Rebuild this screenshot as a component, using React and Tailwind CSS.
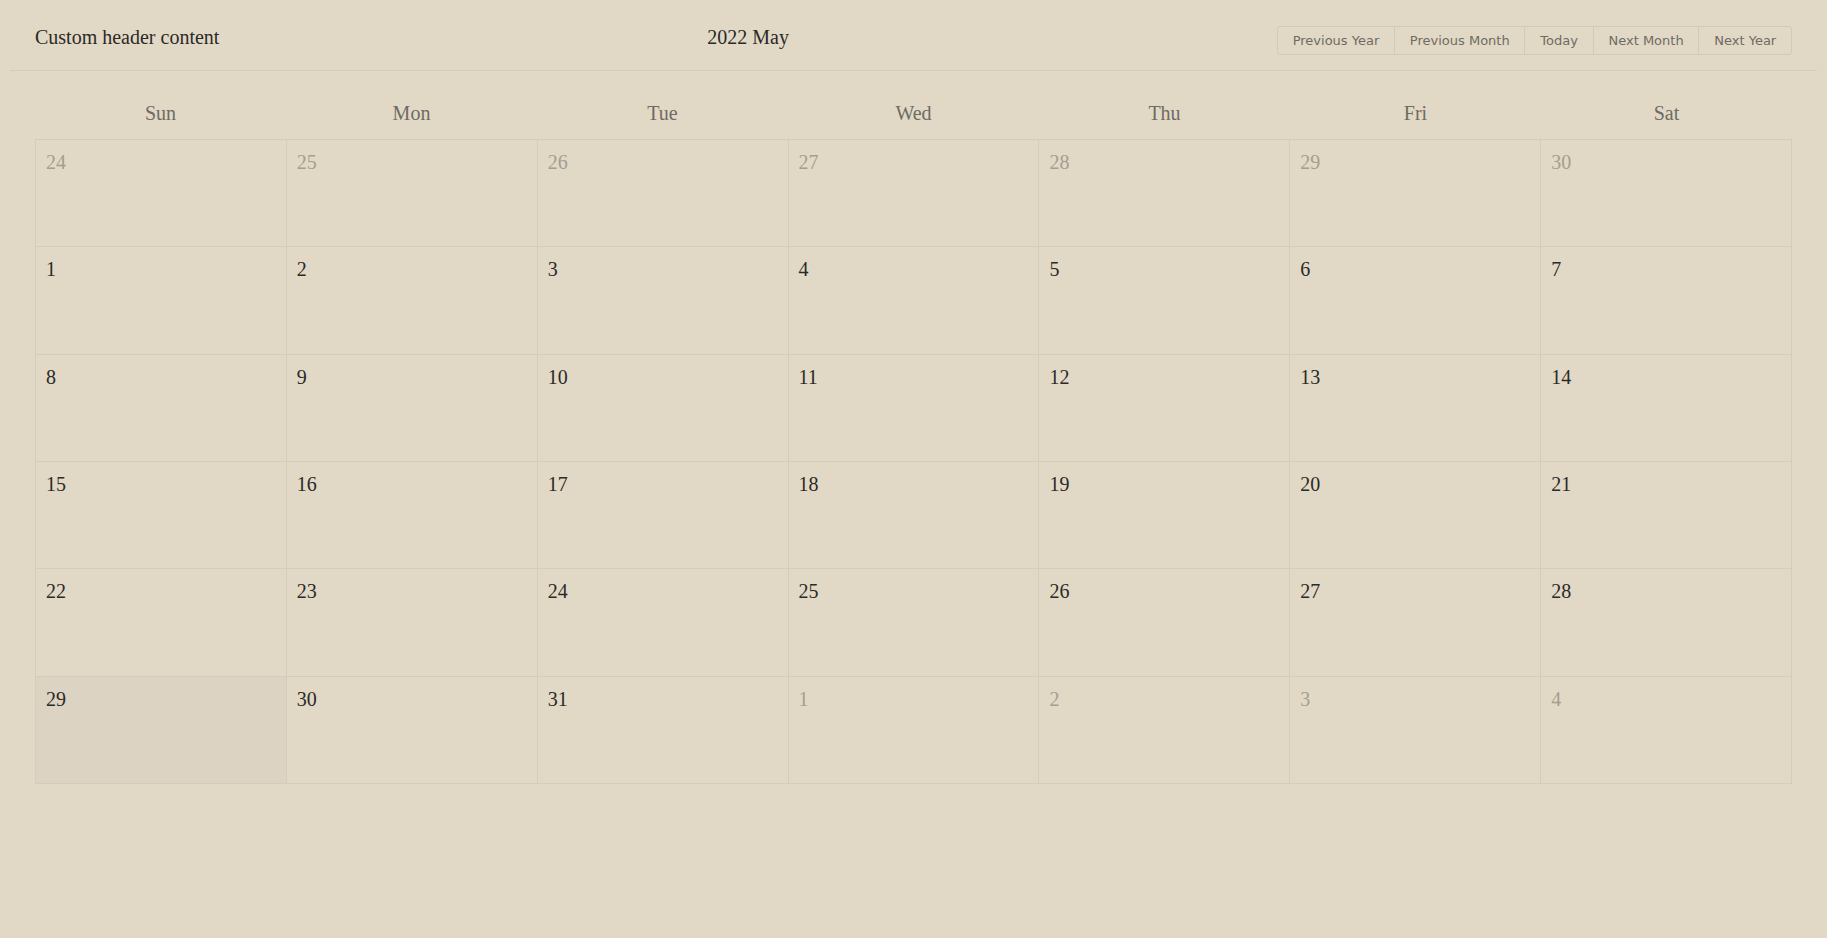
import React from "react";

const weekdays = ["Sun", "Mon", "Tue", "Wed", "Thu", "Fri", "Sat"];

function buildDays() {
  const days = [];
  for (let d = 24; d <= 30; d++) days.push({ n: d, other: true });
  for (let d = 1; d <= 31; d++) days.push({ n: d, other: false, today: d === 29 });
  for (let d = 1; d <= 4; d++) days.push({ n: d, other: true });
  return days;
}

const buttons = ["Previous Year", "Previous Month", "Today", "Next Month", "Next Year"];

export default function App() {
  const days = buildDays();
  return (
    <div
      className="min-h-[938px] w-full bg-[#e1d9c6] px-[10px]"
      style={{ fontFamily: '"Liberation Serif", "Times New Roman", serif' }}
    >
      <div className="flex items-start justify-between border-b border-[#d6cdb9] px-[25px] pt-[26px] pb-[15px]">
        <div className="text-[20px] leading-[23px] text-[#2b2a27]">Custom header content</div>
        <div className="text-[20px] leading-[23px] text-[#2b2a27]">2022 May</div>
        <div
          className="flex h-[29px] rounded-[3px] border border-[#d3cab6]"
          style={{ fontFamily: '"DejaVu Sans", Verdana, sans-serif' }}
        >
          {buttons.map((b, i) => (
            <div
              key={b}
              className={
                "flex items-center px-[14.8px] text-[13px] text-[#6f6b63] " +
                (i > 0 ? "border-l border-[#d3cab6]" : "")
              }
            >
              {b}
            </div>
          ))}
        </div>
      </div>
      <div className="px-[25px]">
        <div className="mt-[31px] mb-[14px] grid grid-cols-7">
          {weekdays.map((w) => (
            <div key={w} className="text-center text-[20px] leading-[23px] text-[#6f6b63]">
              {w}
            </div>
          ))}
        </div>
        <div className="grid h-[645px] grid-cols-7 grid-rows-6 border-t border-l border-[#d6cdb9]">
          {days.map((d, i) => (
            <div
              key={i}
              className={
                "border-r border-b border-[#d6cdb9] pt-[11px] pl-[10px] text-[20px] leading-[23px] " +
                (d.other ? "text-[#a59e8f] " : "text-[#2b2a27] ") +
                (d.today ? "bg-[#ddd3c2]" : "")
              }
            >
              {d.n}
            </div>
          ))}
        </div>
      </div>
    </div>
  );
}
